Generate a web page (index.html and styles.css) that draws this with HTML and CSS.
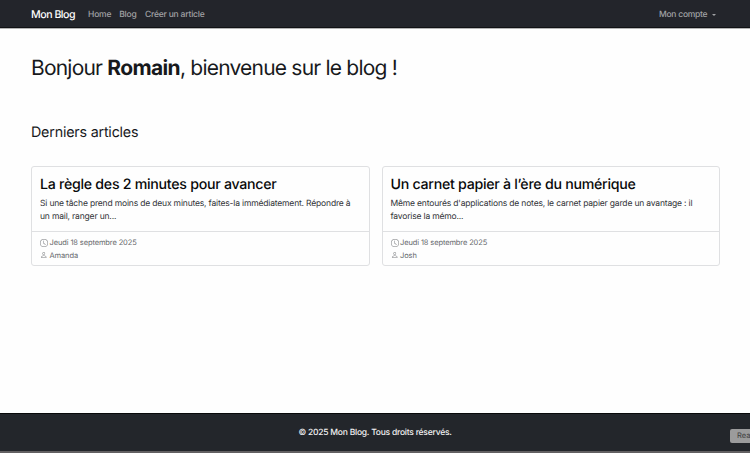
FILE: index.html
```html
<!DOCTYPE html>
<html lang="fr">
<head>
<meta charset="utf-8">
<title>Mon Blog</title>
<link rel="stylesheet" href="styles.css">
</head>
<body>
<svg class="sprite" aria-hidden="true">
  <symbol id="clock" viewBox="0 0 16 16"><path d="M8 3.5a.5.5 0 0 0-1 0V9a.5.5 0 0 0 .252.434l3.5 2a.5.5 0 0 0 .496-.868L8 8.71z"/><path d="M8 16A8 8 0 1 0 8 0a8 8 0 0 0 0 16m7-8A7 7 0 1 1 1 8a7 7 0 0 1 14 0"/></symbol>
  <symbol id="person" viewBox="0 0 16 16"><path d="M8 8a3 3 0 1 0 0-6 3 3 0 0 0 0 6m2-3a2 2 0 1 1-4 0 2 2 0 0 1 4 0m4 8c0 1-1 1-1 1H3s-1 0-1-1 1-4 6-4 6 3 6 4m-1-.004c-.001-.246-.154-.986-.832-1.664C11.516 10.68 10.289 10 8 10s-3.516.68-4.168 1.332c-.678.678-.83 1.418-.832 1.664z"/></symbol>
</svg>
<nav class="navbar">
  <span class="brand">Mon Blog</span>
  <span class="nav-link home">Home</span>
  <span class="nav-link blog">Blog</span>
  <span class="nav-link create">Créer un article</span>
  <span class="nav-link account">Mon compte</span>
</nav>
<main>
  <h1>Bonjour <strong>Romain</strong>, bienvenue sur le blog !</h1>
  <h2>Derniers articles</h2>
  <div class="articles">
    <article class="card">
      <div class="card-body">
        <h3>La règle des 2 minutes pour avancer</h3>
        <p>Si une tâche prend moins de deux minutes, faites-la immédiatement. Répondre à<br>un mail, ranger un...</p>
      </div>
      <div class="card-footer">
        <div class="meta"><svg><use href="#clock"/></svg><span>Jeudi 18 septembre 2025</span></div>
        <div class="meta person"><svg><use href="#person"/></svg><span>Amanda</span></div>
      </div>
    </article>
    <article class="card">
      <div class="card-body">
        <h3>Un carnet papier à l’ère du numérique</h3>
        <p>Même entourés d'applications de notes, le carnet papier garde un avantage : il<br>favorise la mémo...</p>
      </div>
      <div class="card-footer">
        <div class="meta"><svg><use href="#clock"/></svg><span>Jeudi 18 septembre 2025</span></div>
        <div class="meta person"><svg><use href="#person"/></svg><span>Josh</span></div>
      </div>
    </article>
  </div>
</main>
<footer>
  <span>© 2025 Mon Blog. Tous droits réservés.</span>
</footer>
<div class="tip">Rea</div>
</body>
</html>
```
FILE: styles.css
```css
* { box-sizing: border-box; }
body {
  margin: 0;
  height: 453px;
  overflow: hidden;
  display: flex;
  flex-direction: column;
  background: #fefefe;
  color: #17191c;
  font: 8.5px/13px Inter, "Liberation Sans", sans-serif;
  text-rendering: geometricPrecision;
}
.sprite { position: absolute; width: 0; height: 0; }
.navbar {
  display: flex;
  align-items: center;
  height: 28px;
  padding: 2px 30px 0 31px;
  background: #23252b;
  border-bottom: 1px solid #111215;
  box-shadow: 0 1px #b4b4b5;
  color: #a0a1a4;
  letter-spacing: -0.2px;
  font-weight: 500;
  white-space: nowrap;
}
.nav-link { padding-top: 1px; }
.brand { width: 57px; font-size: 10.6px; font-weight: 500; letter-spacing: -0.47px; color: #fff; }
.home { width: 31.2px; }
.blog { width: 25.8px; }
.account { margin-left: auto; display: flex; align-items: center; width: 61px; letter-spacing: -0.26px; }
.account::after {
  content: "";
  margin-left: 5px;
  border: 2.4px solid transparent;
  border-top-color: currentColor;
  border-bottom: 0;
}
main { flex: 1; padding: 0 30px 0 31px; }
h1, h2, h3, p { margin: 0; white-space: nowrap; }
h1 { margin-top: 28px; font-size: 21px; line-height: 26px; font-weight: 400; letter-spacing: -0.79px; }
strong { font-weight: 700; letter-spacing: -0.65px; }
h2 { margin-top: 42px; font-size: 14.3px; line-height: 18px; font-weight: 400; letter-spacing: -0.2px; }
.articles { display: grid; grid-template-columns: repeat(2, minmax(0, 1fr)); gap: 12px; margin-top: 24px; }
.card { border: 1px solid #dfe0e2; border-radius: 3px; height: 100px; }
.card-body { height: 65px; padding: 8.5px 8px 0; border-bottom: 1px solid #dfe0e2; }
h3 { font-size: 14.2px; line-height: 18px; font-weight: 500; color: #08090a; margin-bottom: 4.5px; letter-spacing: -0.28px; }
p { color: #303236; letter-spacing: -0.17px; }
.card-footer { padding: 4.5px 8px 0; color: #67696c; font-size: 7.5px; letter-spacing: -0.12px; }
.meta { display: flex; align-items: center; gap: 1.5px; height: 12.5px; }
.meta svg { width: 8px; height: 8px; fill: #77797c; }
.meta.person svg { width: 7.5px; margin-right: 0.5px; }
footer {
  display: flex;
  align-items: center;
  justify-content: center;
  height: 40px;
  padding-top: 2px;
  background: #23262b;
  border-top: 1px solid #08090a;
  border-bottom: 2px solid #626062;
  color: #f1f1f2;
  font-weight: 500;
  letter-spacing: -0.23px;
}
.tip {
  position: absolute;
  right: -4px;
  top: 429px;
  width: 24px;
  height: 14px;
  padding-left: 7px;
  border-radius: 2px;
  background: #9b9b9c;
  color: #3d3e40;
  font-size: 7.5px;
  line-height: 14px;
}
```
